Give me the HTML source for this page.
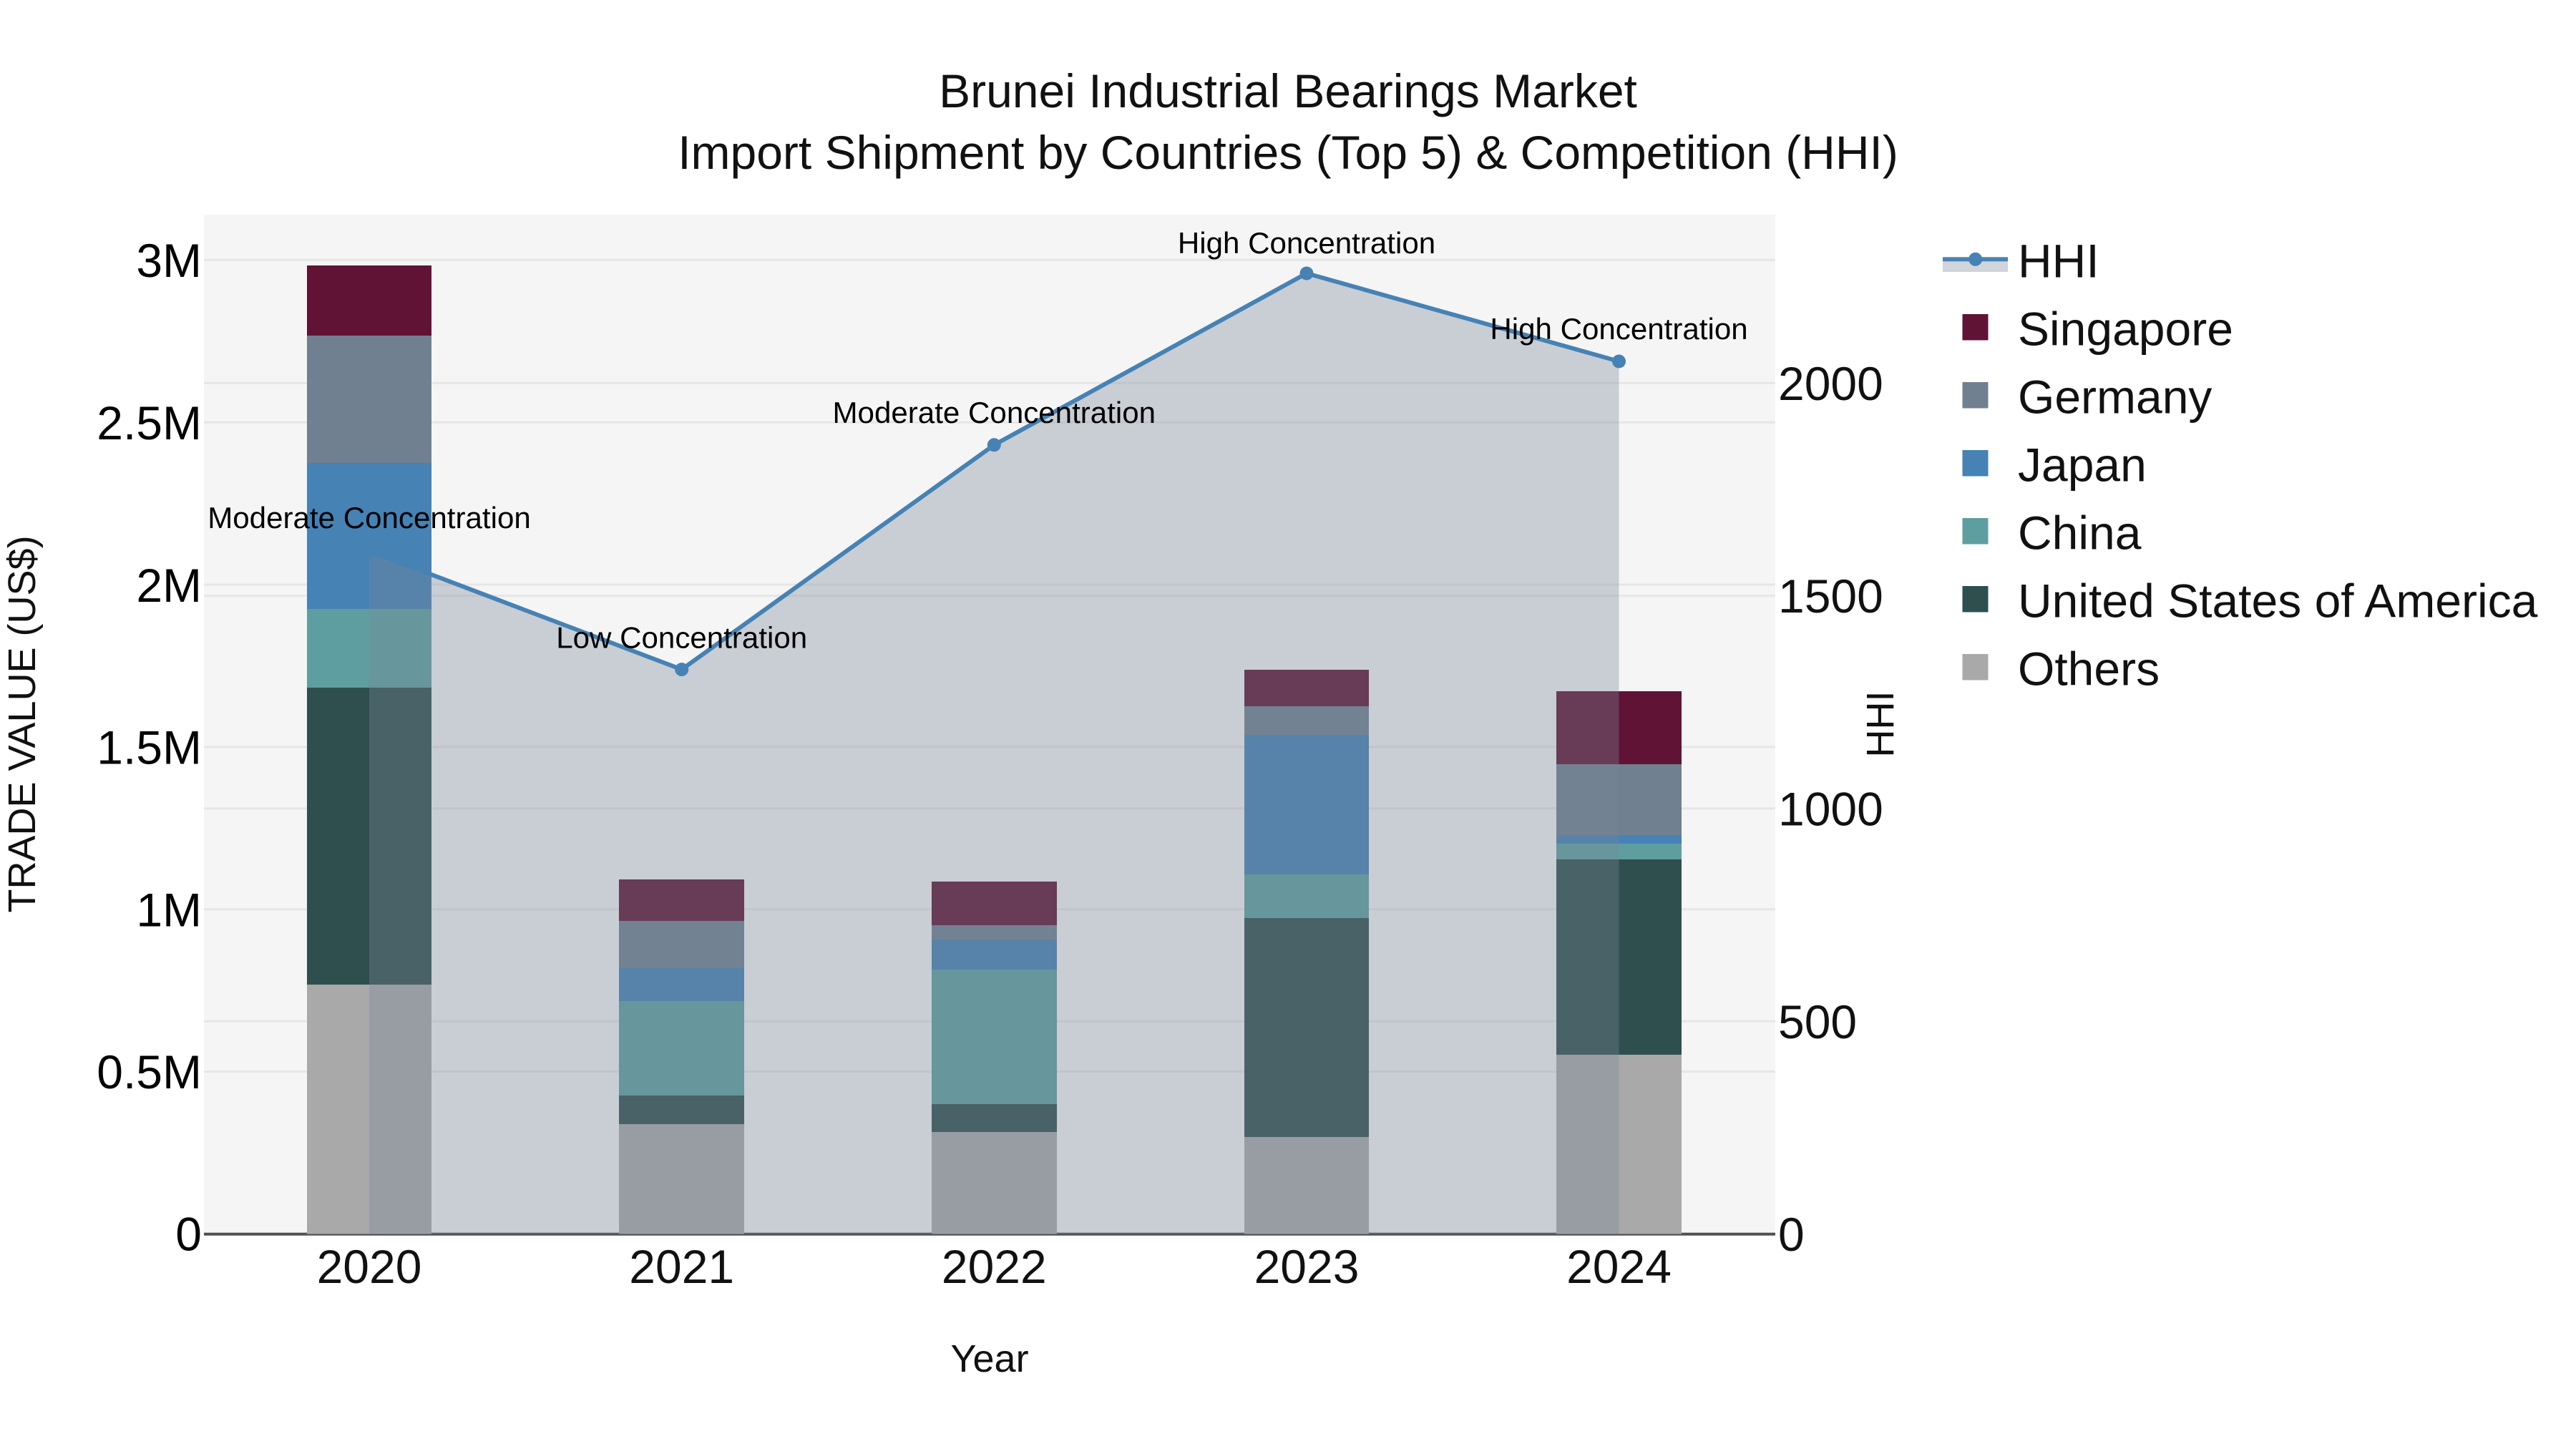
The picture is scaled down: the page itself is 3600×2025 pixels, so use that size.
<!DOCTYPE html>
<html>
<head>
<meta charset="utf-8">
<style>
html,body{margin:0;padding:0;background:#fff;width:3600px;height:2025px;overflow:hidden}
svg{display:block}
text{font-family:"Liberation Sans",sans-serif}
</style>
</head>
<body>
<svg xmlns="http://www.w3.org/2000/svg" width="3600" height="2025" viewBox="0 0 3600 2025">
<rect width="3600" height="2025" fill="#fff"/>
<rect x="285" y="300" width="2196" height="1424.7" fill="#f5f5f5"/>

<!-- grid -->
<g stroke="#e6e6e6" stroke-width="3">
<path d="M285 363.3H2481M285 590.2H2481M285 817H2481M285 1043.9H2481M285 1270.8H2481M285 1497.6H2481"/>
<path d="M285 535.3H2481M285 832.6H2481M285 1129.9H2481M285 1427.2H2481"/>
</g>
<rect x="285" y="1722.7" width="2196" height="4" fill="#505050"/>

<!-- bars -->
<g shape-rendering="crispEdges">
<!-- 2020 -->
<rect x="429" y="1376" width="174" height="348.7" fill="#A9A9A9"/>
<rect x="429" y="961" width="174" height="415" fill="#2F4F4F"/>
<rect x="429" y="851" width="174" height="110" fill="#5F9EA0"/>
<rect x="429" y="647" width="174" height="204" fill="#4682B4"/>
<rect x="429" y="469" width="174" height="178" fill="#708090"/>
<rect x="429" y="371" width="174" height="98" fill="#601335"/>
<!-- 2021 -->
<rect x="865" y="1571" width="175" height="153.7" fill="#A9A9A9"/>
<rect x="865" y="1531" width="175" height="40" fill="#2F4F4F"/>
<rect x="865" y="1399" width="175" height="132" fill="#5F9EA0"/>
<rect x="865" y="1353" width="175" height="46" fill="#4682B4"/>
<rect x="865" y="1287" width="175" height="66" fill="#708090"/>
<rect x="865" y="1229" width="175" height="58" fill="#601335"/>
<!-- 2022 -->
<rect x="1302" y="1582" width="175" height="142.7" fill="#A9A9A9"/>
<rect x="1302" y="1543" width="175" height="39" fill="#2F4F4F"/>
<rect x="1302" y="1355" width="175" height="188" fill="#5F9EA0"/>
<rect x="1302" y="1313" width="175" height="42" fill="#4682B4"/>
<rect x="1302" y="1293" width="175" height="20" fill="#708090"/>
<rect x="1302" y="1232" width="175" height="61" fill="#601335"/>
<!-- 2023 -->
<rect x="1739" y="1589" width="174" height="135.7" fill="#A9A9A9"/>
<rect x="1739" y="1283" width="174" height="306" fill="#2F4F4F"/>
<rect x="1739" y="1222" width="174" height="61" fill="#5F9EA0"/>
<rect x="1739" y="1027" width="174" height="195" fill="#4682B4"/>
<rect x="1739" y="987" width="174" height="40" fill="#708090"/>
<rect x="1739" y="936" width="174" height="51" fill="#601335"/>
<!-- 2024 -->
<rect x="2175" y="1474" width="175" height="250.7" fill="#A9A9A9"/>
<rect x="2175" y="1201" width="175" height="273" fill="#2F4F4F"/>
<rect x="2175" y="1179" width="175" height="22" fill="#5F9EA0"/>
<rect x="2175" y="1167" width="175" height="12" fill="#4682B4"/>
<rect x="2175" y="1068" width="175" height="99" fill="#708090"/>
<rect x="2175" y="966" width="175" height="102" fill="#601335"/>
</g>

<!-- HHI area + line -->
<polygon points="516,770 952.7,935.6 1389.3,621.8 1826,382 2262.5,505 2262.5,1724.7 516,1724.7" fill="rgb(119,136,153)" fill-opacity="0.35"/>
<polyline points="516,770 952.7,935.6 1389.3,621.8 1826,382 2262.5,505" fill="none" stroke="#4682B4" stroke-width="6"/>
<g fill="#4682B4">
<circle cx="516" cy="770" r="9.5"/>
<circle cx="952.7" cy="935.6" r="9.5"/>
<circle cx="1389.3" cy="621.8" r="9.5"/>
<circle cx="1826" cy="382" r="9.5"/>
<circle cx="2262.5" cy="505" r="9.5"/>
</g>

<!-- annotations -->
<g font-size="42.1" fill="#000" text-anchor="middle">
<text x="516" y="738">Moderate Concentration</text>
<text x="952.7" y="905.5">Low Concentration</text>
<text x="1389.3" y="591">Moderate Concentration</text>
<text x="1826" y="354">High Concentration</text>
<text x="2262.5" y="474">High Concentration</text>
</g>

<!-- title -->
<g font-size="66" fill="#111" text-anchor="middle">
<text x="1800" y="150">Brunei Industrial Bearings Market</text>
<text x="1800" y="236">Import Shipment by Countries (Top 5) &amp; Competition (HHI)</text>
</g>

<!-- left ticks -->
<g font-size="66" fill="#000" text-anchor="end">
<text x="282" y="387">3M</text>
<text x="282" y="614">2.5M</text>
<text x="282" y="841">2M</text>
<text x="282" y="1067.5">1.5M</text>
<text x="282" y="1294.5">1M</text>
<text x="282" y="1521">0.5M</text>
<text x="282" y="1747.5">0</text>
</g>

<!-- right ticks -->
<g font-size="66" fill="#111">
<text x="2485" y="559">2000</text>
<text x="2485" y="856">1500</text>
<text x="2485" y="1153.5">1000</text>
<text x="2485" y="1451">500</text>
<text x="2485" y="1748">0</text>
</g>

<!-- x ticks -->
<g font-size="66" fill="#111" text-anchor="middle">
<text x="516" y="1793">2020</text>
<text x="952.7" y="1793">2021</text>
<text x="1389.3" y="1793">2022</text>
<text x="1826" y="1793">2023</text>
<text x="2262.5" y="1793">2024</text>
</g>

<!-- axis titles -->
<text x="1383" y="1917" font-size="54" fill="#111" text-anchor="middle">Year</text>
<text transform="translate(49 1012) rotate(-90)" font-size="54" fill="#111" text-anchor="middle">TRADE VALUE (US$)</text>
<text transform="translate(2646 1012) rotate(-90)" font-size="54" fill="#111" text-anchor="middle">HHI</text>

<!-- legend -->
<rect x="2715" y="362" width="91" height="18" fill="rgb(119,136,153)" fill-opacity="0.35"/>
<rect x="2715" y="359.3" width="91" height="6" fill="#4682B4"/>
<circle cx="2760.7" cy="362.3" r="9.5" fill="#4682B4"/>
<g shape-rendering="crispEdges">
<rect x="2742.3" y="439" width="36.4" height="36.4" fill="#601335"/>
<rect x="2742.3" y="534" width="36.4" height="36.4" fill="#708090"/>
<rect x="2742.3" y="629" width="36.4" height="36.4" fill="#4682B4"/>
<rect x="2742.3" y="724" width="36.4" height="36.4" fill="#5F9EA0"/>
<rect x="2742.3" y="819" width="36.4" height="36.4" fill="#2F4F4F"/>
<rect x="2742.3" y="914" width="36.4" height="36.4" fill="#A9A9A9"/>
</g>
<g font-size="66" fill="#111">
<text x="2820" y="387.5">HHI</text>
<text x="2820" y="482.5">Singapore</text>
<text x="2820" y="577.5">Germany</text>
<text x="2820" y="672.5">Japan</text>
<text x="2820" y="767.5">China</text>
<text x="2820" y="862.5">United States of America</text>
<text x="2820" y="957.5">Others</text>
</g>
</svg>
</body>
</html>
